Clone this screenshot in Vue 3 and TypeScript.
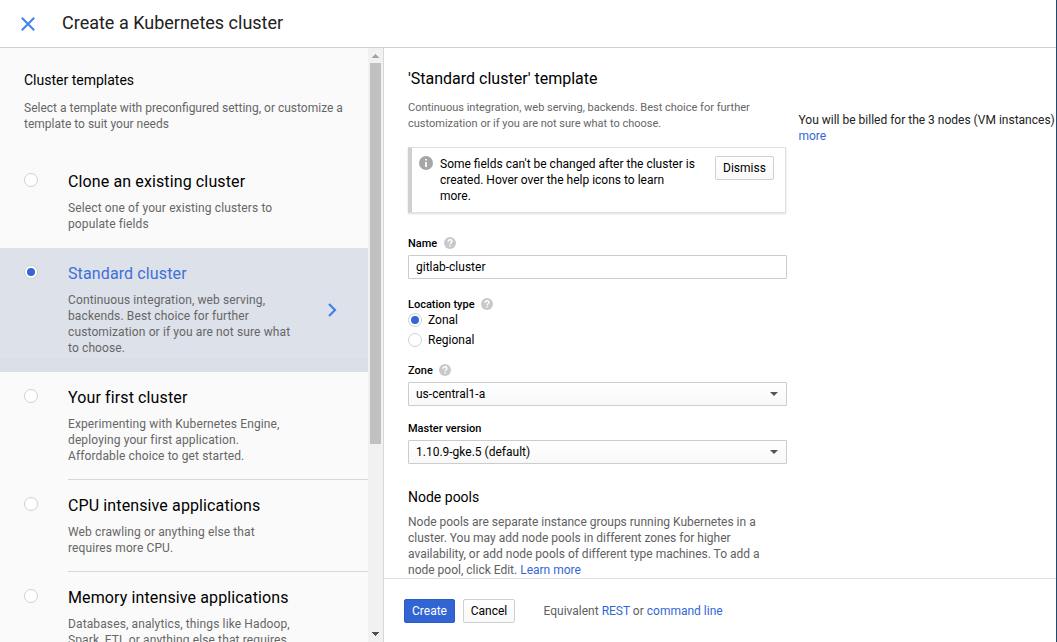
<script setup lang="ts">
import { ref } from 'vue'

interface Template {
  id: string
  title: string
  lines: string[]
  divider: boolean
}

const templates: Template[] = [
  { id: 'clone', title: 'Clone an existing cluster', lines: ['Select one of your existing clusters to', 'populate fields'], divider: false },
  { id: 'standard', title: 'Standard cluster', lines: ['Continuous integration, web serving,', 'backends. Best choice for further', 'customization or if you are not sure what', 'to choose.'], divider: false },
  { id: 'first', title: 'Your first cluster', lines: ['Experimenting with Kubernetes Engine,', 'deploying your first application.', 'Affordable choice to get started.'], divider: true },
  { id: 'cpu', title: 'CPU intensive applications', lines: ['Web crawling or anything else that', 'requires more CPU.'], divider: true },
  { id: 'memory', title: 'Memory intensive applications', lines: ['Databases, analytics, things like Hadoop,', 'Spark, ETL or anything else that requires'], divider: false },
]
const selected = ref('standard')
const location = ref('Zonal')
const clusterName = ref('gitlab-cluster')
</script>

<template>
  <div class="page">
    <header class="header">
      <svg class="close" width="16" height="16" viewBox="0 0 16 16"><path d="M1.8 1.8 14.2 14.2M14.2 1.8 1.8 14.2" fill="none" stroke="#4380f0" stroke-width="2" /></svg>
      <h1>Create a Kubernetes cluster</h1>
    </header>
    <div class="body">
      <aside class="sidebar">
        <div class="list">
          <h2 class="list-title">Cluster templates</h2>
          <p class="list-intro">Select a template with preconfigured setting, or customize a<br />template to suit your needs</p>
          <div v-for="t in templates" :key="t.id" class="item" :class="{ active: t.id === selected }" @click="selected = t.id">
            <span class="radio" :class="{ on: t.id === selected }"></span>
            <div class="item-body" :class="{ divider: t.divider }">
              <div class="item-title">{{ t.title }}</div>
              <div class="item-desc"><div v-for="l in t.lines" :key="l">{{ l }}</div></div>
            </div>
            <svg v-if="t.id === selected" class="chevron" width="10" height="14" viewBox="0 0 10 14"><path d="M1 1 7 7 1 13" fill="none" stroke="#4380e8" stroke-width="2.2" /></svg>
          </div>
        </div>
        <div class="scrollbar">
          <svg width="15" height="15" viewBox="0 0 15 15" shape-rendering="crispEdges"><path d="M4 10h7v-1h-1v-1h-1v-1h-1v-1h-1v1h-1v1h-1v1h-1z" fill="#a3a3a3" /></svg>
          <div class="thumb"></div>
          <svg class="down" width="15" height="15" viewBox="0 0 15 15" shape-rendering="crispEdges"><path d="M4 5h7v1h-1v1h-1v1h-1v1h-1v-1h-1v-1h-1v-1h-1z" fill="#505050" /></svg>
        </div>
      </aside>
      <main class="main">
        <div class="content">
          <section class="form">
            <h2 class="form-title">'Standard cluster' template</h2>
            <p class="form-intro">Continuous integration, web serving, backends. Best choice for further<br />customization or if you are not sure what to choose.</p>
            <div class="notice">
              <svg class="info" width="14" height="14" viewBox="0 0 14 14"><circle cx="7" cy="7" r="7" fill="#a6a6a6" /><path d="M6.1 2.9h1.8v1.7H6.1zM6.1 6h1.8v5H6.1z" fill="#fff" /></svg>
              <p>Some fields can't be changed after the cluster is<br />created. Hover over the help icons to learn<br />more.</p>
              <button class="btn dismiss">Dismiss</button>
            </div>
            <div class="label name-label">Name
              <svg class="help" width="12" height="12" viewBox="0 0 12 12"><circle cx="6" cy="6" r="6" fill="#c9c9c9" /><path d="M4.1 4.8C4.1 3.5 4.9 2.8 6 2.8s1.9.7 1.9 1.7C7.9 5.8 6.1 5.8 6.1 7.3" fill="none" stroke="#fff" stroke-width="1.4" /><path d="M5.3 8.2h1.5v1.4H5.3z" fill="#fff" /></svg>
            </div>
            <input v-model="clusterName" class="field" spellcheck="false" />
            <div class="label location-label">Location type
              <svg class="help" width="12" height="12" viewBox="0 0 12 12"><circle cx="6" cy="6" r="6" fill="#c9c9c9" /><path d="M4.1 4.8C4.1 3.5 4.9 2.8 6 2.8s1.9.7 1.9 1.7C7.9 5.8 6.1 5.8 6.1 7.3" fill="none" stroke="#fff" stroke-width="1.4" /><path d="M5.3 8.2h1.5v1.4H5.3z" fill="#fff" /></svg>
            </div>
            <div v-for="o in ['Zonal', 'Regional']" :key="o" class="option" @click="location = o">
              <span class="radio" :class="{ on: o === location }"></span>{{ o }}
            </div>
            <div class="label zone-label">Zone
              <svg class="help" width="12" height="12" viewBox="0 0 12 12"><circle cx="6" cy="6" r="6" fill="#c9c9c9" /><path d="M4.1 4.8C4.1 3.5 4.9 2.8 6 2.8s1.9.7 1.9 1.7C7.9 5.8 6.1 5.8 6.1 7.3" fill="none" stroke="#fff" stroke-width="1.4" /><path d="M5.3 8.2h1.5v1.4H5.3z" fill="#fff" /></svg>
            </div>
            <div class="field select">us-central1-a<span class="caret"></span></div>
            <div class="label version-label">Master version</div>
            <div class="field select">1.10.9-gke.5 (default)<span class="caret"></span></div>
            <h3 class="pools-title">Node pools</h3>
            <p class="pools">Node pools are separate instance groups running Kubernetes in a<br />cluster. You may add node pools in different zones for higher<br />availability, or add node pools of different type machines. To add a<br />node pool, click Edit. <a>Learn more</a></p>
          </section>
          <aside class="billing">You will be billed for the 3 nodes (VM instances)<br /><a>more</a></aside>
        </div>
        <footer class="footer">
          <button class="btn primary">Create</button>
          <button class="btn cancel">Cancel</button>
          <span class="equiv">Equivalent <a>REST</a> or <a>command line</a></span>
        </footer>
      </main>
    </div>
  </div>
</template>

<style>
body { margin: 0; overflow: hidden; }
</style>

<style scoped>
* { box-sizing: border-box; }
.page { width: 1057px; height: 642px; display: flex; flex-direction: column; overflow: hidden; background: #fff; border-right: 1px solid #1f4a6d; font: 12px/16px Roboto, "Liberation Sans", sans-serif; color: #000; white-space: nowrap; }
h1, h2, h3, p { margin: 0; font-weight: 400; }
a { color: #3367d6; }
.header { height: 48px; flex: none; display: flex; align-items: center; padding-left: 20px; border-bottom: 1px solid #d0d0d0; }
.header h1 { font-size: 18px; line-height: 24px; margin: -1px 0 0 26px; color: #212121; }
.body { flex: 1; min-height: 0; display: flex; }
.sidebar { width: 384px; flex: none; display: flex; background: #fafafa; border-right: 1px solid #d8d8d8; }
.list { width: 368px; overflow: hidden; }
.list-title { margin: 22px 0 0 24px; font-size: 14px; line-height: 20px; }
.list-intro { margin: 10px 0 24px 24px; color: #666; }
.item { position: relative; display: flex; padding-left: 24px; letter-spacing: 0.12px; }
.item.active { background: linear-gradient(#dce1ea 110px, #dadee7 110px); }
.radio { width: 14px; height: 14px; flex: none; border: 1px solid #d0d0d0; border-radius: 50%; background: #fff; display: flex; align-items: center; justify-content: center; }
.radio.on::after { content: ''; width: 8px; height: 8px; border-radius: 50%; background: #3367d6; }
.item > .radio { margin-top: 17px; }
.item-body { flex: 1; margin-left: 30px; padding: 16px 0; }
.item-body.divider { padding-bottom: 15px; border-bottom: 1px solid #d8d8d8; }
.item-title { font-size: 16px; line-height: 20px; margin-bottom: 8px; }
.active .item-title { color: #3f6fd8; }
.item-desc { color: #666; }
.chevron { position: absolute; left: 328px; top: 55px; }
.scrollbar { width: 15px; display: flex; flex-direction: column; background: #f1f1f1; }
.scrollbar svg { display: block; flex: none; }
.thumb { width: 11px; height: 381px; margin-left: 2px; background: #c1c1c1; }
.down { margin-top: auto; }
.main { flex: 1; min-width: 0; display: flex; flex-direction: column; }
.content { flex: 1; min-height: 0; display: flex; overflow: hidden; padding-left: 24px; }
.form { width: 379px; flex: none; margin-right: 11.5px; }
.form-title { margin-top: 21px; font-size: 16px; line-height: 20px; }
.form-intro { margin-top: 11px; font-size: 11px; color: #666; }
.notice { display: flex; width: 378px; height: 66px; margin: 15px 0 23px; border: 1px solid #e0e0e0; border-left: 4px solid #d0d0d0; box-shadow: 0 1px 2px rgba(0, 0, 0, .14); }
.info { margin: 8px 0 0 7px; flex: none; }
.notice p { margin: 8px 0 0 7px; flex: 1; }
.btn { height: 24px; padding: 0; border: 1px solid #d0d0d0; border-radius: 2px; background: linear-gradient(#fff, #f9f9f9); font: inherit; color: #000; }
.dismiss { width: 59px; margin: 8px 11px 0 0; }
.label { display: flex; align-items: center; gap: 6.5px; height: 16px; font-size: 11px; font-weight: 500; }
.help { margin-bottom: 2px; }
.name-label { margin-bottom: 3px; }
.field { display: flex; align-items: center; width: 379px; height: 24px; padding: 0 7px; border: 1px solid #ccc; border-radius: 1px; background: #fff; font: inherit; color: #000; outline: none; }
.location-label { margin-top: 18px; margin-bottom: -1px; }
.option { display: flex; align-items: center; gap: 6px; height: 16px; margin-bottom: 4px; }
.zone-label { margin: 15px 0 3px; }
.select { background: linear-gradient(#fff, #f8f8f8); }
.caret { margin-left: auto; margin-right: 1px; border: 4px solid transparent; border-top-color: #555; border-bottom: 0; }
.version-label { margin: 15px 0 3px; }
.pools-title { margin: 23px 0 7px; font-size: 14px; line-height: 20px; }
.pools { color: #616161; }
.billing { margin-top: 64px; color: #212121; }
.footer { height: 64px; flex: none; display: flex; align-items: center; padding-left: 20px; border-top: 1px solid #e0e0e0; }
.primary { width: 51px; background: #3165d3; border-color: #2a5bc7; color: #fff; }
.cancel { width: 52px; margin-left: 8px; }
.equiv { margin-left: 28.5px; color: #616161; }
</style>
